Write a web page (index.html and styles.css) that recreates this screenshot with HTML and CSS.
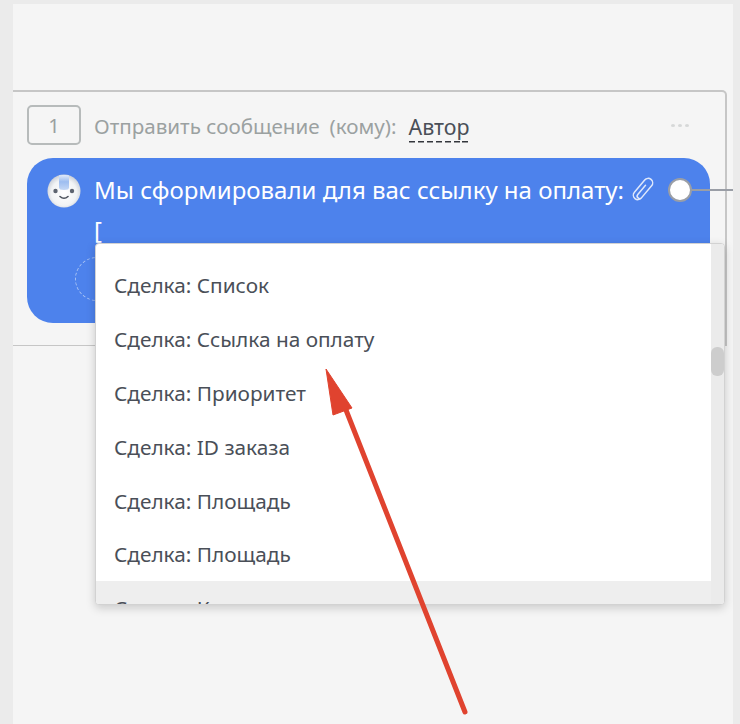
FILE: index.html
```html
<!DOCTYPE html>
<html lang="ru">
<head>
<meta charset="utf-8">
<title>Отправить сообщение</title>
<link rel="stylesheet" href="styles.css">
</head>
<body>
<main class="panel">
  <section class="card">
    <header class="card-head">
      <div class="step">1</div>
      <span class="action">Отправить сообщение</span>
      <span class="action whom">(кому):</span>
      <span class="target">Автор</span>
      <span class="more"><i></i><i></i><i></i></span>
    </header>
    <div class="bubble">
      <svg class="bot" width="34" height="34" viewBox="0 0 34 34">
        <defs>
          <radialGradient id="face" cx="50%" cy="55%" r="55%">
            <stop offset="0" stop-color="#ffffff"/>
            <stop offset="0.7" stop-color="#f1f3f5"/>
            <stop offset="1" stop-color="#c9ced6"/>
          </radialGradient>
          <linearGradient id="crest" x1="0" y1="0" x2="0" y2="1">
            <stop offset="0" stop-color="#dfe9f9"/>
            <stop offset="0.45" stop-color="#9dbdf0"/>
            <stop offset="1" stop-color="#c5d8f5"/>
          </linearGradient>
        </defs>
        <circle cx="17" cy="17" r="16.5" fill="url(#face)"/>
        <path d="M12 1.6C14 .9 20 .9 22 1.6V13.5Q22 16 17 16T12 13.5Z" fill="url(#crest)"/>
        <circle cx="8.5" cy="17" r="2.2" fill="#5d6470"/>
        <circle cx="25" cy="17" r="2.2" fill="#5d6470"/>
        <path d="M13 22.5Q17 26 21 22.5" fill="none" stroke="#4a505a" stroke-width="1.6" stroke-linecap="round"/>
      </svg>
      <div class="message">
        <div class="line">Мы сформировали для вас ссылку на оплату:</div>
        <div class="line">[</div>
      </div>
      <svg class="clip" width="24" height="28" viewBox="0 0 24 28" fill="none" stroke="#dfe8fb" stroke-width="1.5" stroke-linecap="round" stroke-linejoin="round">
        <g transform="translate(12 14) rotate(40) translate(-5 -12.5)">
          <path d="M4.5 8V20a2.5 2.5 0 0 0 5 0V4.5a4.5 4.5 0 0 0-9 0V20.5a4.5 4.5 0 0 0 9 0"/>
        </g>
      </svg>
      <span class="add-ring"></span>
      <span class="port"></span>
      <span class="wire"></span>
    </div>
  </section>

  <div class="dropdown">
    <ul class="options">
      <li>Сделка: Список</li>
      <li>Сделка: Ссылка на оплату</li>
      <li>Сделка: Приоритет</li>
      <li>Сделка: ID заказа</li>
      <li>Сделка: Площадь</li>
      <li>Сделка: Площадь</li>
      <li class="active">Сделка: Компания</li>
    </ul>
    <div class="track"><span class="thumb"></span></div>
  </div>

  <svg class="arrow" width="740" height="724" viewBox="0 0 740 724">
    <path d="M465 712 346 410" fill="none" stroke="#e0432f" stroke-width="5" stroke-linecap="round"/>
    <path d="M326 369 352 408 333 415Z" fill="#e0432f" stroke="#e0432f" stroke-width="1" stroke-linejoin="round"/>
  </svg>
</main>
</body>
</html>
```
FILE: styles.css
```css
* { box-sizing: border-box; }
html, body { margin: 0; height: 100%; }
body {
  background: #ebebeb;
  padding: 4px 7px 0 13px;
  font-family: "Noto Sans", "Open Sans", sans-serif;
  overflow: hidden;
}
.panel {
  height: 720px;
  background: #f5f5f5;
  padding: 86px 6px 0 0;
}
.card {
  height: 256px;
  border: 2px solid #c6c6c6;
  border-width: 2px 2px 1px 0;
  border-top-right-radius: 5px;
  padding: 13px 0 0 14px;
}
.card-head {
  display: flex;
  align-items: center;
  height: 40px;
  position: relative;
}
.step {
  width: 54px;
  height: 40px;
  border: 2px solid #b7bbbb;
  border-radius: 5px;
  color: #9aa0a0;
  font-size: 20px;
  display: flex;
  align-items: center;
  justify-content: center;
  margin-right: 13px;
}
.action {
  color: #9ba1a1;
  font-size: 20.6px;
  padding-top: 1px;
  margin-right: 10px;
}
.whom { margin-right: 12px; }
.target {
  color: #4a4f58;
  font-size: 21.4px;
  line-height: 28px;
  height: 30px;
  margin-top: 5px;
  background: repeating-linear-gradient(90deg, #33363c 0 6px, transparent 6px 8.9px) left bottom / 100% 1.5px no-repeat;
}
.more {
  display: flex;
  gap: 3px;
  margin-left: auto;
  margin-right: 36px;
}
.more i {
  width: 4px;
  height: 3px;
  background: #d6d8d8;
  border-radius: 50%;
}
.bubble {
  position: relative;
  display: flex;
  width: 683px;
  height: 165px;
  margin-top: 13px;
  padding: 12px 0 0 20px;
  background: #4d82ec;
  border-radius: 26px;
  color: #fff;
}
.bot { flex: none; margin-top: 4px; margin-right: 13px; }
.line {
  font-size: 24px;
  line-height: 40px;
  white-space: nowrap;
}
.clip { flex: none; margin: 5px 0 0 7px; }
.add-ring {
  position: absolute;
  left: 48px;
  top: 99px;
  width: 44px;
  height: 44px;
  border: 1.5px dashed #a9c3f3;
  border-radius: 50%;
}
.port {
  position: absolute;
  left: 641px;
  top: 20px;
  width: 24px;
  height: 24px;
  background: #fff;
  border: 2px solid #9a9ea6;
  border-radius: 50%;
}
.wire {
  position: absolute;
  left: 665px;
  top: 31px;
  width: 41px;
  height: 2px;
  background: #9a9ea6;
}
.dropdown {
  position: absolute;
  left: 95px;
  top: 243px;
  width: 630px;
  height: 362px;
  display: flex;
  background: #fff;
  border: 1px solid #d2d2d2;
  border-radius: 4px;
  box-shadow: 0 3px 10px rgba(0, 0, 0, .18);
  overflow: hidden;
}
.options {
  flex: 1;
  list-style: none;
  margin: 0;
  padding: 14.5px 0 0;
  height: 400px;
}
.options li {
  height: 53.8px;
  padding-left: 18px;
  display: flex;
  align-items: center;
  font-size: 20.8px;
  color: #4a4f58;
}
.options li.active { background: #eeeeee; }
.track {
  width: 13px;
  flex: none;
  background: #ebebeb;
  padding-top: 103px;
}
.thumb {
  display: block;
  width: 13px;
  height: 29px;
  background: #cdcdcd;
  border-radius: 6px;
}
.arrow {
  position: absolute;
  left: 0;
  top: 0;
  pointer-events: none;
}
```
